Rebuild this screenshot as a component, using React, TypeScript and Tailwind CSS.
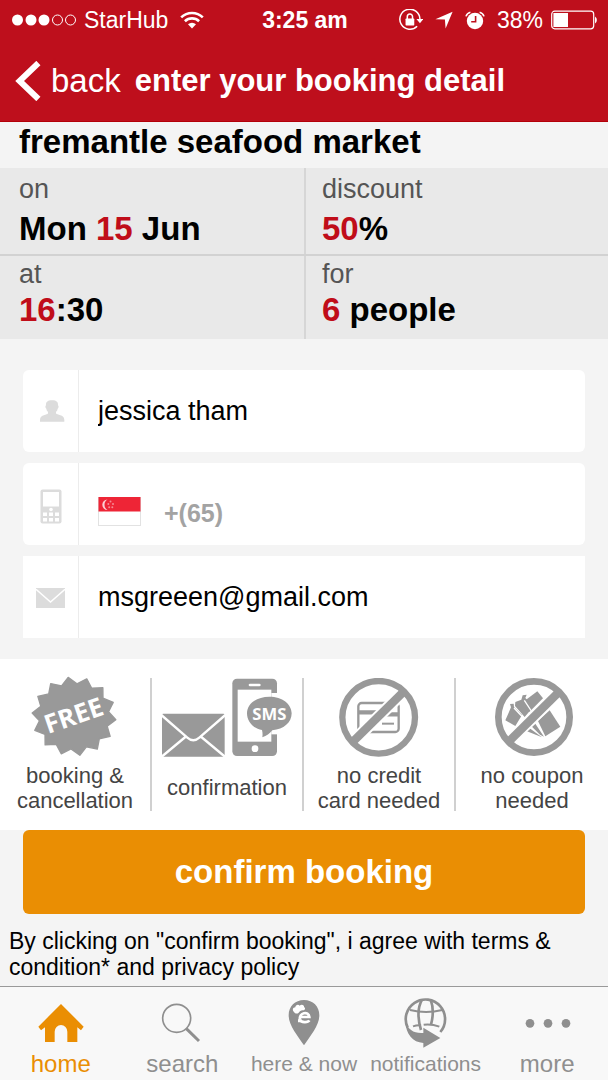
import type { ReactNode } from "react";

const burstPoints = Array.from({ length: 28 }, (_, i) => {
  const angle = ((-8 + (i * 360) / 28) * Math.PI) / 180;
  const scale = i % 2 === 0 ? 1 : 0.83;
  const x = 220 + Math.sin(angle) * 126 * scale;
  const y = 182 - Math.cos(angle) * 118 * scale;
  return `${x.toFixed(1)},${y.toFixed(1)}`;
}).join(" ");

function StatusBar() {
  return (
    <div className="grid h-10 grid-cols-[1fr_auto_1fr] items-center pr-[10px] pl-3 text-[23px] leading-7">
      <div className="flex items-center gap-2">
        <svg className="h-3 w-16" viewBox="0 0 64 12" fill="#fff" aria-hidden="true">
          <circle cx="5.5" cy="6" r="5.5" />
          <circle cx="19" cy="6" r="5.5" />
          <circle cx="32" cy="6" r="5.5" />
          <circle cx="45.5" cy="6" r="5" fill="none" stroke="#fff" />
          <circle cx="58.5" cy="6" r="5" fill="none" stroke="#fff" />
        </svg>
        <span>StarHub</span>
        <svg className="ml-1 h-[18px] w-6" viewBox="0 0 24 18" fill="none" stroke="#fff" strokeWidth="2.6" aria-hidden="true">
          <path d="M1.2 6.4a15.6 15.6 0 0 1 21.6 0" />
          <path d="M4.9 10.2a10.4 10.4 0 0 1 14.2 0" />
          <path d="M8 13.2a6 6 0 0 1 8 0l-4 4.2z" fill="#fff" stroke="none" />
        </svg>
      </div>
      <span className="font-bold">3:25 am</span>
      <div className="flex items-center justify-end gap-2">
        <svg className="h-[22px] w-6" viewBox="0 0 22 20" fill="none" stroke="#fff" strokeWidth="1.4" aria-hidden="true">
          <path d="M16.6 15.7A9.2 9.2 0 1 1 19.2 9" />
          <path d="M16 9h6.4l-3.2 4z" fill="#fff" stroke="none" />
          <rect x="6" y="8.6" width="8" height="6.4" rx="0.6" fill="#fff" stroke="none" />
          <path d="M7.6 9V7a2.4 2.6 0 0 1 4.8 0v2" />
        </svg>
        <svg className="ml-1 h-[18px] w-[18px]" viewBox="0 0 18 18" fill="#fff" aria-hidden="true">
          <path d="M17.6 0.8 10.6 17.4 9.9 8.6 0.4 8.2z" />
        </svg>
        <svg className="ml-1 h-[19px] w-5" viewBox="0 0 20 19" aria-hidden="true">
          <circle cx="10" cy="10" r="8.2" fill="#fff" />
          <path d="M1 5.4A6 6 0 0 1 5.4 1.2M14.6 1.2A6 6 0 0 1 19 5.4" fill="none" stroke="#fff" strokeWidth="1.6" />
          <path d="M10.6 5v5.8H6.2" fill="none" stroke="#be0f1c" strokeWidth="1.6" />
        </svg>
        <span className="ml-1">38%</span>
        <svg className="h-5 w-[47px]" viewBox="0 0 47 20" aria-hidden="true">
          <rect x="0.7" y="1.2" width="42" height="17.6" rx="3" fill="none" stroke="#fff" strokeWidth="1.2" />
          <rect x="2.4" y="3" width="14.6" height="14" fill="#fff" />
          <path d="M44 6.6a4 4 0 0 1 0 6.8z" fill="#fff" />
        </svg>
      </div>
    </div>
  );
}

function Term({ children }: { children: ReactNode }) {
  return <dt className="text-[27px] leading-9 text-[#555]">{children}</dt>;
}

function Red({ children }: { children: ReactNode }) {
  return <span className="text-[#c00d19]">{children}</span>;
}

function Field({ id, label, icon, square, children }: { id: string; label: string; icon: ReactNode; square?: boolean; children: ReactNode }) {
  return (
    <div className={square ? "flex h-[82px] bg-white" : "flex h-[82px] rounded-md bg-white"}>
      <label htmlFor={id} aria-label={label} className="flex w-14 shrink-0 items-center justify-center border-r border-[#ececec]">
        {icon}
      </label>
      {children}
    </div>
  );
}

function Feature({ icon, children }: { icon: ReactNode; children: ReactNode }) {
  return (
    <li className="flex h-[133px] flex-col items-center border-r-2 border-[#d0d0d0] last:border-r-0">
      {icon}
      <p className="flex grow items-center pt-[3px] text-center text-[22px] leading-[25px] text-[#444]">{children}</p>
    </li>
  );
}

function NavItem({ label, icon, active, small }: { label: string; icon: ReactNode; active?: boolean; small?: boolean }) {
  return (
    <a href="#" className={active ? "flex flex-col items-center text-[#ea8e03]" : "flex flex-col items-center text-[#8f8f8f]"}>
      {icon}
      <span className={small ? "text-[21px] leading-7 whitespace-nowrap" : "text-2xl leading-7 whitespace-nowrap"}>{label}</span>
    </a>
  );
}

const inputClass = "w-full min-w-0 bg-transparent pl-[19px] text-[27px] text-black outline-none";
const valueClass = "text-[33px] font-bold";
const featureIcon = "h-[82px] w-[90px] shrink-0";
const navIcon = "h-14 w-15";

export default function App() {
  return (
    <div className="flex min-h-screen flex-col bg-[#f4f4f4] font-['Liberation_Sans',Arial,sans-serif] text-black">
      <header className="border-b border-[#b30009] bg-[#be0f1c] text-white">
        <StatusBar />
        <div className="flex h-[81px] items-center gap-[14px] pl-[15px]">
          <button type="button" className="flex items-center gap-[10px] text-[33px] leading-10">
            <svg className="h-10 w-[26px]" viewBox="0 0 26 40" fill="none" stroke="#fff" strokeWidth="6" aria-hidden="true">
              <path d="M23.4 2 4.6 20l18.800 18" />
            </svg>
            back
          </button>
          <h1 className="text-[31px] leading-10 font-bold whitespace-nowrap">enter your booking detail</h1>
        </div>
      </header>

      <main>
        <h2 className="pb-[6px] pl-[19px] text-[33px] leading-10 font-bold">fremantle seafood market</h2>

        <dl className="bg-[#e9e9e9]">
          <div className="grid grid-cols-[306fr_302fr] border-b-2 border-[#d2d2d2]">
            <div className="border-r-2 border-[#d6d6d6] pt-[3px] pb-[3px] pl-[19px]">
              <Term>on</Term>
              <dd className={`${valueClass} leading-11`}>
                Mon <Red>15</Red> Jun
              </dd>
            </div>
            <div className="pt-[3px] pb-[3px] pl-4">
              <Term>discount</Term>
              <dd className={`${valueClass} leading-11`}>
                <Red>50</Red>%
              </dd>
            </div>
          </div>
          <div className="grid grid-cols-[306fr_302fr]">
            <div className="border-r-2 border-[#d6d6d6] pb-[11px] pl-[19px]">
              <Term>at</Term>
              <dd className={`${valueClass} leading-9`}>
                <Red>16</Red>:30
              </dd>
            </div>
            <div className="pb-[11px] pl-4">
              <Term>for</Term>
              <dd className={`${valueClass} leading-9`}>
                <Red>6</Red> people
              </dd>
            </div>
          </div>
        </dl>

        <form className="flex flex-col" onSubmit={(e) => e.preventDefault()}>
          <div className="flex flex-col gap-[11px] px-[23px] pt-[31px] pb-[21px]">
            <Field
              id="name"
              label="Name"
              icon={
                <svg className="ml-[2px] h-[22px] w-[26px]" viewBox="117 123 78 66" fill="#dcdcdc" aria-hidden="true">
                  <path d="M156 124C170 124 175 130 174 139 177 141 176 147 173 149 172 154 171 156 168 158V163C170 169 193 166 193 183V188H120V183C120 166 143 169 144 163V158C141 156 140 154 139 149 136 147 135 141 138 139 137 130 142 124 156 124Z" />
                </svg>
              }
            >
              <input id="name" className={inputClass} defaultValue="jessica tham" />
            </Field>
            <Field
              id="phone"
              label="Phone number"
              icon={
                <svg className="mt-[5px] h-[35px] w-[22px]" viewBox="0 0 22 35" aria-hidden="true">
                  <rect x="0.5" y="0.5" width="21" height="34" rx="2" fill="#dcdcdc" />
                  <rect x="3" y="3" width="16" height="14.5" fill="#fff" />
                  <circle cx="11" cy="20.5" r="1.8" fill="#fff" />
                  <path d="M3 23.5h4v3.5H3zm6 0h4v3.5H9zm6 0h4v3.5h-4zM3 29h4v3.5H3zm6 0h4v3.5H9zm6 0h4v3.5h-4z" fill="#fff" />
                </svg>
              }
            >
              <div className="flex grow items-center gap-[23px] pt-[15px] pl-[19px]">
                <svg className="h-[29px] w-[43px] shrink-0" viewBox="0 0 43 29" role="img" aria-label="Singapore">
                  <rect x="0.5" y="0.5" width="42" height="28" fill="#fff" stroke="#e2e2e2" />
                  <rect x="0.5" y="0" width="42" height="14.5" fill="#ee2536" />
                  <path d="M9.5 2.6a5.2 5.2 0 1 0 0 10.4 6 6 0 0 1 0-10.4z" fill="#fbd0d4" />
                  <g fill="#f58a93">
                    <circle cx="12.5" cy="4.6" r="1" />
                    <circle cx="10.3" cy="7" r="1" />
                    <circle cx="15" cy="7" r="1" />
                    <circle cx="11.2" cy="10.2" r="1" />
                    <circle cx="14.3" cy="10.2" r="1" />
                  </g>
                </svg>
                <span className="shrink-0 pt-[2px] text-[25px] leading-8 font-bold whitespace-nowrap text-[#a3a3a3]">+(65)</span>
                <input id="phone" type="tel" className="w-full min-w-0 grow bg-transparent text-[25px] outline-none" />
              </div>
            </Field>
            <Field
              id="email"
              label="Email"
              square
              icon={
                <svg className="mt-[2px] h-5 w-[29px]" viewBox="0 0 29 20" aria-hidden="true">
                  <rect width="29" height="20" fill="#dcdcdc" />
                  <path d="M0 1.2 14.5 14 29 1.2" fill="none" stroke="#fff" strokeWidth="1.5" />
                </svg>
              }
            >
              <input id="email" type="email" className={inputClass} defaultValue="msgreeen@gmail.com" />
            </Field>
          </div>

          <ul className="grid grid-cols-4 bg-white py-[19px]">
            <Feature
              icon={
                <svg className={featureIcon} viewBox="88 67 270 246" overflow="visible" aria-hidden="true">
                  <polygon points={burstPoints} fill="#999" stroke="#999" strokeWidth="4" strokeLinejoin="round" />
                  <text x="220" y="207" transform="rotate(-19 220 182)" textAnchor="middle" fill="#fff" fontFamily="Open Sans, sans-serif" fontWeight="700" fontSize="78">
                    FREE
                  </text>
                </svg>
              }
            >
              booking &amp;
              <br />
              cancellation
            </Feature>
            <Feature
              icon={
                <svg className="h-[82px] w-[134px] shrink-0" viewBox="480 67 402 246" aria-hidden="true">
                  <rect x="486" y="174" width="188" height="129" rx="4" fill="#999" />
                  <path d="M484 178 562 246Q580 262 598 246L676 178M484 304 556 244M676 304 604 244" fill="none" stroke="#fff" strokeWidth="7" />
                  <rect x="697" y="69" width="134" height="232" rx="14" fill="#999" />
                  <rect x="713" y="102" width="101" height="156" fill="#fff" />
                  <rect x="746" y="84" width="36" height="8" rx="4" fill="#fff" />
                  <circle cx="765" cy="279" r="10" fill="#fff" />
                  <path d="M814 112h20v124h-20z" fill="#fff" />
                  <path d="M808 123c39 0 67 22 67 50s-24 48-58 51c-8 10-17 17-30 21 1-8 1-14-1-22-27-5-45-25-45-50 0-28 28-50 67-50z" fill="#999" />
                  <text x="808" y="192" textAnchor="middle" fill="#fff" fontFamily="Open Sans, sans-serif" fontWeight="700" fontSize="50">
                    SMS
                  </text>
                </svg>
              }
            >
              confirmation
            </Feature>
            <Feature
              icon={
                <svg className={featureIcon} viewBox="92 67 270 246" fill="none" stroke="#999" aria-hidden="true">
                  <rect x="165" y="142" width="121" height="87" rx="10" strokeWidth="7" />
                  <path d="M165 170h60M240 176h45" strokeWidth="13" />
                  <path d="M236 204h36" strokeWidth="6" />
                  <path d="M144 263 306 103" stroke="#fff" strokeWidth="37" />
                  <path d="M144 263 306 103" strokeWidth="25" />
                  <circle cx="226" cy="185" r="109" strokeWidth="19" />
                </svg>
              }
            >
              no credit
              <br />
              card needed
            </Feature>
            <Feature
              icon={
                <svg className={featureIcon} viewBox="549 67 270 246" aria-hidden="true">
                  <g fill="#999">
                    <path d="M664 134 700 107 717 128 676 169z" />
                    <path d="M633 151 634 139 652 132 656 119 668 117 664 127 690 151 662 184z" />
                    <path d="M604 194 621 155 618 145 629 144 630 154 654 178 634 211z" />
                    <path d="M702 196 737 164 769 213 724 242z" />
                    <path d="M694 204 720 243 708 237 684 213zM679 219 714 245 669 227z" />
                  </g>
                  <path d="M630 157 655 183M661 134 682 166" stroke="#fff" strokeWidth="4" fill="none" />
                  <g fill="none" stroke="#999">
                    <path d="M610 262 770 104" stroke="#fff" strokeWidth="35" />
                    <path d="M610 262 770 104" strokeWidth="25" />
                    <circle cx="690" cy="184" r="107" strokeWidth="20" />
                  </g>
                </svg>
              }
            >
              no coupon
              <br />
              needed
            </Feature>
          </ul>

          <div className="px-[23px]">
            <button type="submit" className="h-[84px] w-full rounded-md bg-[#ea8e03] text-[33px] font-bold text-white">
              confirm booking
            </button>
          </div>
        </form>

        <p className="px-[9px] pt-[14px] pb-[6px] text-[23px] leading-[26px]">
          By clicking on "confirm booking", i agree with terms &amp; condition* and privacy policy
        </p>
      </main>

      <nav className="mt-auto grid grid-cols-5 border-t border-[#999] bg-[#f8f8f8] pt-[7px] pb-[2px]">
        <NavItem
          label="home"
          active
          icon={
            <svg className={navIcon} viewBox="92 42 180 168" fill="#ea8e03" aria-hidden="true">
              <path d="M182 72 250 140 242 151 231 142V186H201V155A19 20 0 0 0 163 155V186H134V142L122 151 114 140z" />
            </svg>
          }
        />
        <NavItem
          label="search"
          icon={
            <svg className={navIcon} viewBox="457 42 180 168" fill="none" stroke="#8f8f8f" aria-hidden="true">
              <circle cx="531" cy="115" r="42" strokeWidth="5" />
              <path d="M560 146 598 183" strokeWidth="9" />
            </svg>
          }
        />
        <NavItem
          label="here & now"
          small
          icon={
            <svg className={navIcon} viewBox="-18 0 180 168" aria-hidden="true">
              <path d="M72 18c27 0 46 19 46 46 0 30-26 60-46 90C52 124 26 94 26 64c0-27 19-46 46-46z" fill="#8f8f8f" />
              <path d="M42 54c-6-5-4-14 4-14 0-8 10-10 13-5 5-6 15-2 13 4 6 3 3 11-4 10-6 0-9 3-12 7-4 4-10 4-14-2z" fill="#fff" />
              <path d="M88 79c-4 7-25 8-28-3-4-19 26-27 28-7H62" fill="none" stroke="#fff" strokeWidth="8" />
              <path d="M54 74v11h12z" fill="#fff" />
            </svg>
          }
        />
        <NavItem
          label="notifications"
          small
          icon={
            <svg className={navIcon} viewBox="275 42 180 168" fill="none" stroke="#8f8f8f" strokeWidth="6" aria-hidden="true">
              <path d="M310 143A59 59 0 1 1 408 156" strokeWidth="8" />
              <path d="M353 59C339 84 340 116 350 150M379 59C388 84 387 108 380 134" strokeWidth="8" />
              <path d="M317 90Q365 102 414 90M326 139Q340 134 350 136M358 134Q382 131 405 140" />
              <path d="M303 124C311 150 329 161 357 159V143L408 174 357 203V189C325 187 305 164 303 124z" fill="#8f8f8f" stroke="none" />
            </svg>
          }
        />
        <NavItem
          label="more"
          icon={
            <svg className={navIcon} viewBox="639 42 180 168" fill="#8f8f8f" aria-hidden="true">
              <circle cx="678" cy="130" r="13" />
              <circle cx="732" cy="130" r="13" />
              <circle cx="786" cy="130" r="13" />
            </svg>
          }
        />
      </nav>
    </div>
  );
}
